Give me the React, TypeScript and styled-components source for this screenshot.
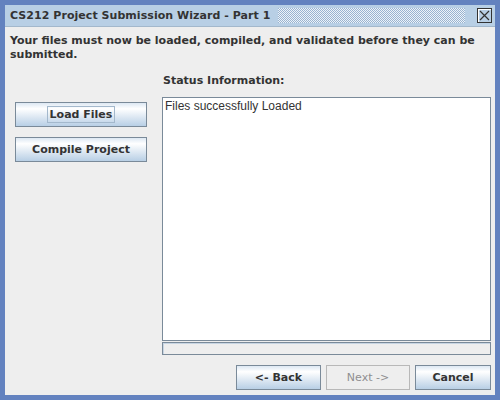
import styled, { createGlobalStyle } from "styled-components";

const GlobalStyle = createGlobalStyle`
  html, body {
    margin: 0;
    padding: 0;
    background: #6382bf;
  }
  * {
    box-sizing: border-box;
  }
`;

const Frame = styled.div`
  width: 500px;
  height: 400px;
  background-color: #6382bf;
  padding: 5px;
  display: flex;
`;
const Window = styled.div`
  flex: 1;
  display: flex;
  flex-direction: column;
  background-color: #eeeeee;
  font-family: "DejaVu Sans", "Liberation Sans", sans-serif;
  color: #333333;
`;
const TitleBar = styled.div`
  height: 22px;
  background-color: #b8cfe5;
  border-bottom: 1px solid #a3b8cc;
  display: flex;
  align-items: center;
  padding: 0 3px 0 5px;
  gap: 8px;
`;
const Title = styled.span`
  font-size: 11px;
  font-weight: bold;
  letter-spacing: 0.05px;
  white-space: nowrap;
`;
const Dots = styled.div`
  flex: 1;
  height: 15px;
  margin-right: 4px;
  background: repeating-conic-gradient(#ffffff 0 25%, #8fa9c9 0 50%);
  background-size: 2px 2px;
  opacity: 0.75;
`;
const CloseButton = styled.div`
  width: 15px;
  height: 15px;
  border: 1px solid #333333;
  box-shadow: inset 1px 1px 0 #ffffff;
  background: #b8cfe5;
  display: flex;
  align-items: center;
  justify-content: center;
`;
const Body = styled.div`
  flex: 1;
  display: flex;
  flex-direction: column;
  padding: 7px 4px 5px 5px;
`;
const Intro = styled.p`
  margin: 0;
  font-size: 11px;
  font-weight: bold;
  line-height: 14px;
  letter-spacing: 0;
  white-space: nowrap;
`;
const Columns = styled.div`
  flex: 1;
  display: flex;
  margin-top: 11px;
`;
const LeftColumn = styled.div`
  width: 132px;
  margin-left: 5px;
  padding-top: 29px;
  display: flex;
  flex-direction: column;
  gap: 10px;
`;
const RightColumn = styled.div`
  flex: 1;
  margin-left: 15px;
  display: flex;
  flex-direction: column;
`;
const Label = styled.div`
  font-size: 11px;
  font-weight: bold;
  height: 24px;
  padding-left: 1px;
  padding-top: 1px;
`;
const TextArea = styled.div`
  flex: 1;
  background: #ffffff;
  border: 1px solid #7a8a99;
  font-family: "Liberation Sans", Arial, sans-serif;
  font-size: 12px;
  color: #333333;
  padding: 1px 2px;
`;
const Progress = styled.div`
  height: 13px;
  border: 1px solid #7a8a99;
  box-shadow: inset 1px 1px 0 #c7d5e3;
  background: #eeeeee;
  margin-top: 1px;
`;
const Button = styled.button<{ $width?: number }>`
  height: 25px;
  width: ${(p) => (p.$width ? `${p.$width}px` : "auto")};
  border: 1px solid ${(p) => (p.disabled ? "#b8b8b8" : "#7a8a99")};
  background: ${(p) =>
    p.disabled
      ? "#eeeeee"
      : "linear-gradient(to bottom, #dde8f3 0%, #ffffff 25%, #d9e5f1 65%, #b8cfe5 100%)"};
  color: ${(p) => (p.disabled ? "#8e8f91" : "#333333")};
  font-family: "DejaVu Sans", "Liberation Sans", sans-serif;
  font-size: 11px;
  font-weight: ${(p) => (p.disabled ? "normal" : "bold")};
  padding: 0;
  display: flex;
  align-items: center;
  justify-content: center;
`;
const FocusBox = styled.span`
  border: 1px solid #a3b8cc;
  padding: 1px 2px;
`;
const Footer = styled.div`
  display: flex;
  justify-content: flex-end;
  gap: 5px;
  margin-top: 10px;
`;

export default function App() {
  return (
    <Frame>
      <GlobalStyle />
      <Window>
        <TitleBar>
          <Title>CS212 Project Submission Wizard - Part 1</Title>
          <Dots />
          <CloseButton>
            <svg width="11" height="11" viewBox="0 0 11 11">
              <path d="M1 1 L10 10 M10 1 L1 10" stroke="#333333" strokeWidth="1.2" />
            </svg>
          </CloseButton>
        </TitleBar>
        <Body>
          <Intro>
            Your files must now be loaded, compiled, and validated before they can be
            <br />
            submitted.
          </Intro>
          <Columns>
            <LeftColumn>
              <Button>
                <FocusBox>Load Files</FocusBox>
              </Button>
              <Button>Compile Project</Button>
            </LeftColumn>
            <RightColumn>
              <Label>Status Information:</Label>
              <TextArea>Files successfully Loaded</TextArea>
              <Progress />
            </RightColumn>
          </Columns>
          <Footer>
            <Button $width={85}>{"<- Back"}</Button>
            <Button $width={84} disabled>
              {"Next ->"}
            </Button>
            <Button $width={76}>Cancel</Button>
          </Footer>
        </Body>
      </Window>
    </Frame>
  );
}
